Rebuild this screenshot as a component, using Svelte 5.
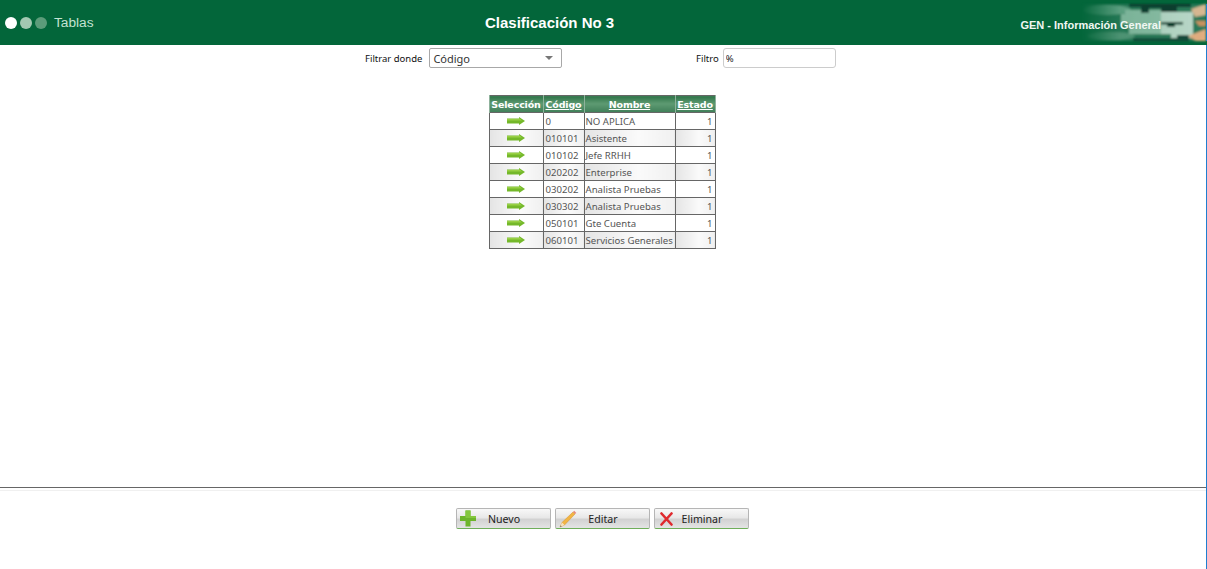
<script>
  const rows = [
    { code: '0', name: 'NO APLICA', state: 1 },
    { code: '010101', name: 'Asistente', state: 1 },
    { code: '010102', name: 'Jefe RRHH', state: 1 },
    { code: '020202', name: 'Enterprise', state: 1 },
    { code: '030202', name: 'Analista Pruebas', state: 1 },
    { code: '030302', name: 'Analista Pruebas', state: 1 },
    { code: '050101', name: 'Gte Cuenta', state: 1 },
    { code: '060101', name: 'Servicios Generales', state: 1 }
  ];
</script>

<div class="page">
  <header class="top">
    <div class="steps">
      <span class="dot"></span>
      <span class="dot mid"></span>
      <span class="dot dim"></span>
      <span class="section">Tablas</span>
    </div>
    <h1>Clasificación No 3</h1>
    <div class="module">GEN - Información General</div>
    <svg class="puzzle" width="158" height="45" viewBox="0 0 158 45" aria-hidden="true">
      <defs>
        <linearGradient id="fade" x1="0" x2="1" y1="0" y2="0">
          <stop offset="0.2" stop-color="#fff" stop-opacity="0" />
          <stop offset="0.45" stop-color="#fff" stop-opacity="0.85" />
          <stop offset="1" stop-color="#fff" stop-opacity="1" />
        </linearGradient>
        <mask id="fade-mask">
          <rect width="158" height="45" fill="url(#fade)" />
        </mask>
        <filter id="soft" x="-5%" y="-5%" width="110%" height="110%">
          <feGaussianBlur stdDeviation="0.8" />
        </filter>
      </defs>
      <g mask="url(#fade-mask)" filter="url(#soft)">
        <rect y="4" width="157" height="37" fill="#2a7a5a" />
        <ellipse cx="58" cy="10" rx="24" ry="5" fill="#6aa88c" />
        <ellipse cx="62" cy="36" rx="24" ry="4" fill="#5a9a7d" />
        <path d="M76 10 H128 V22 H118 V34 H80 V24 H72 V14 H76 Z" fill="#8fc0a8" />
        <path d="M112 12 H144 V38 H122 V34 H112 Z" fill="#bcd9ca" />
        <path d="M80 4 H142 V7 H128 V12 H112 V8 H100 V13 H92 V7 H80 Z" fill="#0e3b2d" />
        <path d="M112 22 H134 V24.5 H126 V27 H118 V24.5 H112 Z" fill="#0e3b2d" />
        <path d="M84 38 H128 V35 H140 V41 H84 Z" fill="#134a3b" />
        <path d="M142 9 L157 4 V15 L146 17 Z" fill="#d9b892" />
        <path d="M146 21 H157 V26 H150 Z" fill="#c9925e" />
        <path d="M139 36 L157 29 V41 H147 Z" fill="#e3ad80" />
      </g>
      <rect x="157" y="4" width="1" height="37" fill="#1f7fd0" />
    </svg>
  </header>

  <div class="filters">
    <div class="field where">
      <label for="campo">Filtrar donde</label>
      <div id="campo" class="select">
        <span>Código</span>
        <i class="caret"></i>
      </div>
    </div>
    <div class="field">
      <label for="filtro">Filtro</label>
      <input id="filtro" class="text" value="%" />
    </div>
  </div>

  <main class="content">
    <table>
      <thead>
        <tr>
          <th class="c-sel">Selección</th>
          <th class="c-code"><a href="#codigo">Código</a></th>
          <th class="c-name"><a href="#nombre">Nombre</a></th>
          <th class="c-state"><a href="#estado">Estado</a></th>
        </tr>
      </thead>
      <tbody>
        {#each rows as row, i}
          <tr class:alt={i % 2 === 1}>
            <td class="pick">
              <svg width="18" height="8" viewBox="0 0 18 8" aria-hidden="true">
                <path d="M0 1.5 H12 V0 L18 4 L12 8 V6.5 H0 Z" fill="#74b82a" />
                <path d="M0 2 H12 V1 L15 3.6 H0 Z" fill="#98d044" />
              </svg>
            </td>
            <td>{row.code}</td>
            <td class="name">{row.name}</td>
            <td class="num">{row.state}</td>
          </tr>
        {/each}
      </tbody>
    </table>
  </main>

  <footer class="actions">
    <button>
      <svg width="16" height="17" viewBox="0 0 16 17" aria-hidden="true">
        <path d="M5.5 0.5 H10.5 V6 H16 V11 H10.5 V16.5 H5.5 V11 H0 V6 H5.5 Z" fill="#6db52b" />
        <path d="M5.5 0.5 H10.5 V6 H16 V8 H5.5 Z" fill="#84c73e" />
      </svg>
      <span>Nuevo</span>
    </button>
    <button>
      <svg width="18" height="18" viewBox="0 0 18 18" aria-hidden="true">
        <path d="M1 17 L3 12.5 L14 2 L16 4 L5.5 15 Z" fill="#f2b544" stroke="#d0912e" stroke-width="0.5" />
        <path d="M14 2 L15.2 0.8 L17.3 2.9 L16 4 Z" fill="#e8897a" />
        <path d="M1 17 L3 12.5 L5.5 15 Z" fill="#f7e3c2" />
        <path d="M1 17 L1.7 15.4 L2.7 16.2 Z" fill="#555" />
      </svg>
      <span>Editar</span>
    </button>
    <button>
      <svg class="cross" width="13" height="14" viewBox="0 0 13 14" aria-hidden="true">
        <path d="M1.5 1.5 L11.5 12.5 M11.5 1.5 L1.5 12.5" stroke="#df2a2e" stroke-width="2.6" stroke-linecap="round" fill="none" />
      </svg>
      <span>Eliminar</span>
    </button>
  </footer>
</div>

<style>
  :global(body) {
    margin: 0;
    background: #fff;
  }

  .page {
    height: 569px;
    box-sizing: border-box;
    border-right: 1px solid #1f7fd0;
    display: flex;
    flex-direction: column;
    font-family: "Noto Sans", Tahoma, sans-serif;
  }

  .top {
    position: relative;
    height: 45px;
    flex: none;
    margin-right: -1px;
    background: #03663a;
    display: grid;
    grid-template-columns: 485px auto 1fr;
    align-items: center;
    font-family: "Liberation Sans", Arial, sans-serif;
    color: #fff;
  }

  .steps {
    display: flex;
    align-items: center;
    gap: 3px;
    padding-left: 5px;
  }

  .dot {
    width: 12px;
    height: 12px;
    border-radius: 50%;
    background: #fff;
  }

  .dot.mid {
    background: #a3c9b2;
  }

  .dot.dim {
    background: #5c9c7a;
  }

  .section {
    margin-left: 4px;
    font-size: 13.7px;
    color: #c4e3d2;
  }

  h1 {
    margin: 0 0 1px;
    font-size: 15px;
    font-weight: 700;
    position: relative;
  }

  .module {
    justify-self: end;
    margin: 5px 46px 0 0;
    font-size: 11px;
    font-weight: 700;
    color: #f0f7f2;
    position: relative;
    z-index: 1;
    white-space: nowrap;
  }

  .puzzle {
    position: absolute;
    right: 0;
    top: 0;
  }

  .filters {
    height: 28px;
    flex: none;
    padding: 3px 0 0 365px;
    box-sizing: border-box;
    display: flex;
    font-size: 9.5px;
    color: #111;
  }

  .field {
    display: flex;
    align-items: center;
    gap: 7px;
    height: 20px;
  }

  .where {
    width: 331px;
  }

  .field:last-child {
    gap: 4px;
  }

  .select {
    height: 18px;
    box-sizing: content-box;
    border: 1px solid #a8a8a8;
    border-radius: 2px;
    display: flex;
    align-items: center;
    justify-content: space-between;
    padding: 0 8px 0 3px;
    width: 120px;
    font-size: 11px;
    color: #333;
  }

  .caret {
    width: 0;
    height: 0;
    border-left: 4px solid transparent;
    border-right: 4px solid transparent;
    border-top: 4px solid #777;
  }

  .text {
    width: 107px;
    height: 18px;
    border: 1px solid #ccc;
    border-radius: 3px;
    padding: 0 2px;
    font: inherit;
    color: #222;
    outline: none;
  }

  .content {
    flex: 1;
    padding: 22px 2px 0 0;
    display: flex;
    justify-content: center;
  }

  table {
    border-collapse: collapse;
    table-layout: fixed;
    width: 225px;
    height: 154px;
    font-size: 9.6px;
    color: #555;
    border: 1px solid #666;
    align-self: flex-start;
  }

  th {
    height: 16px;
    padding: 0;
    background: linear-gradient(#2f7549, #5e9a72 45%, #3f7f58);
    color: #fff;
    font-size: 9.5px;
    font-weight: 700;
    font-family: "DejaVu Sans", Verdana, sans-serif;
    letter-spacing: -0.15px;
    border: 1px solid #8fb29c;
    border-width: 0 1px;
    text-align: center;
    white-space: nowrap;
  }

  th a {
    color: #fff;
  }

  .c-sel { width: 53px; }
  .c-code { width: 40px; }
  .c-name { width: 90px; }
  .c-state { width: 39px; }

  td {
    height: 16px;
    padding: 0 2px;
    border: 1px solid #666;
    white-space: nowrap;
    overflow: hidden;
  }

  td.name {
    padding-left: 1px;
  }

  .alt td {
    background: linear-gradient(90deg, #e4e4e4, #fafafa 60%, #f0f0f0);
  }

  .pick {
    padding: 0;
    text-align: center;
    line-height: 0;
  }

  .num {
    text-align: right;
  }

  .actions {
    height: 82px;
    flex: none;
    box-sizing: border-box;
    border-top: 1px solid #666;
    background: linear-gradient(#f0f0f0, #f0f0f0) 0 2px / 100% 1px no-repeat;
    padding: 20px 1px 0 0;
    display: flex;
    justify-content: center;
    align-items: flex-start;
    gap: 4px;
  }

  button {
    width: 95px;
    height: 21px;
    padding: 0 0 0 3px;
    display: grid;
    grid-template-columns: 1fr auto 1fr;
    align-items: center;
    justify-items: start;
    border: 1px solid #b5b5b5;
    border-bottom: 1px solid #6fae5a;
    border-radius: 2px;
    background: linear-gradient(#f8f8f8, #e8e8e8 45%, #d2d2d2 55%, #e4e4e4);
    font: 10.6px "Noto Sans", Tahoma, sans-serif;
    color: #222;
  }

  button span {
    transform: translateX(-1px);
  }

  .cross {
    margin-left: 2px;
  }
</style>
